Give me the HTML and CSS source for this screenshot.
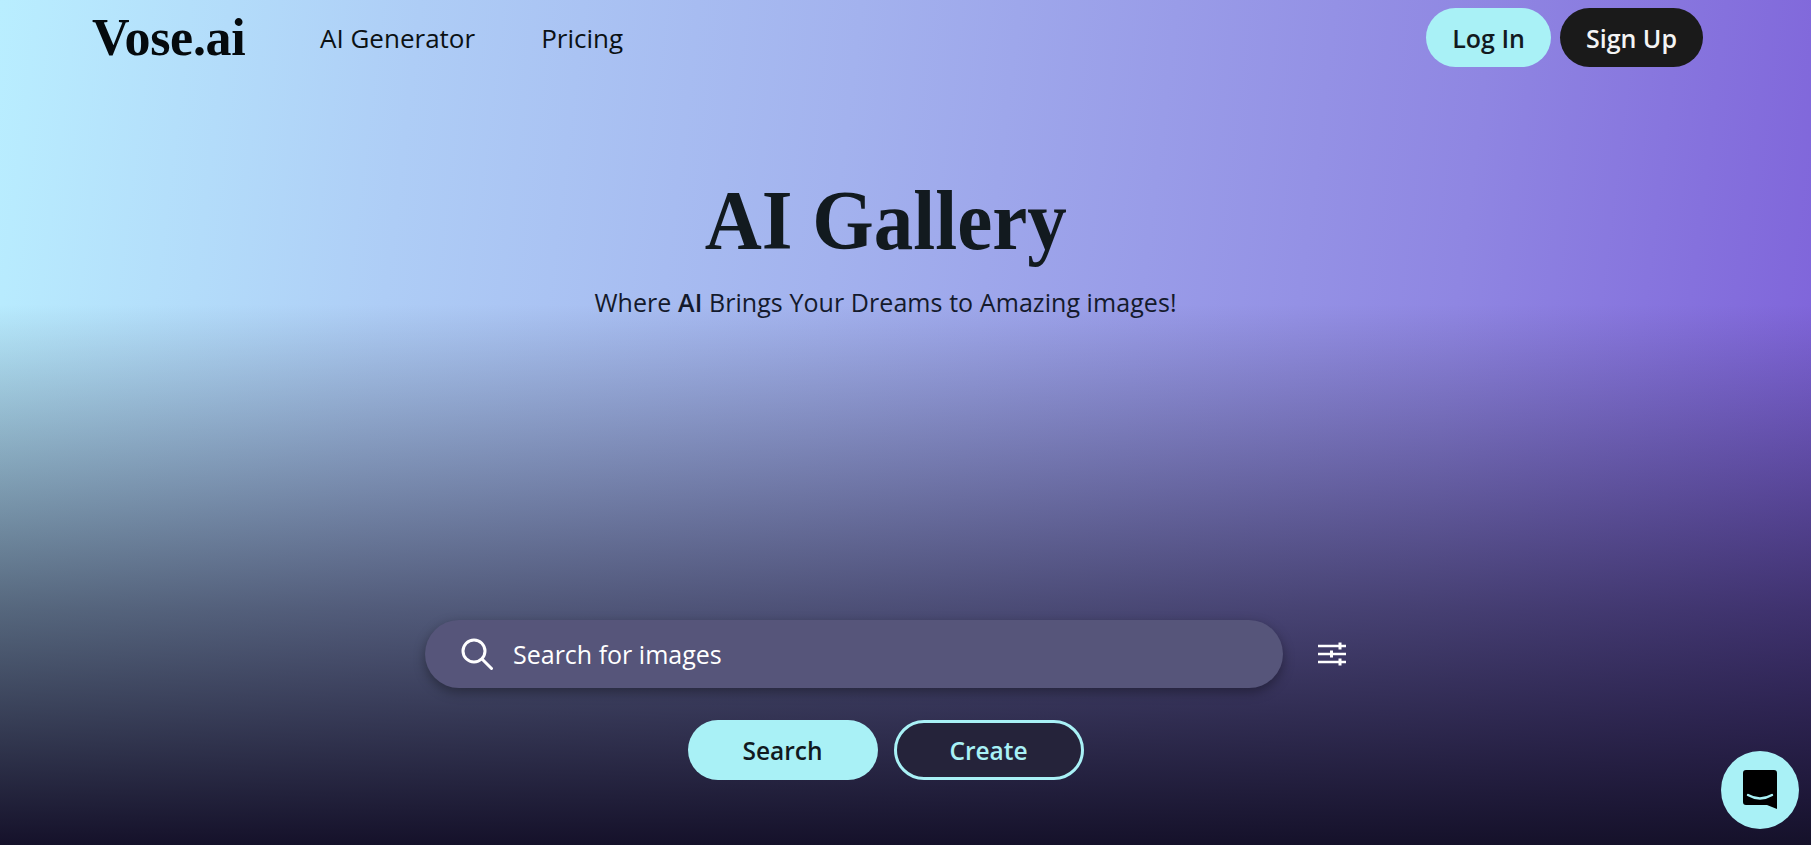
FILE: index.html
```html
<!DOCTYPE html>
<html lang="en">
<head>
    <meta charset="UTF-8">
    <meta name="viewport" content="width=device-width, initial-scale=1.0">
    <title>AI Gallery</title>
    <link rel="stylesheet" href="styles.css">
</head>
<body>
    <header class="topbar">
        <a class="logo" href="#">Vose.ai</a>
        <nav class="nav">
            <a href="#">AI Generator</a>
            <a href="#">Pricing</a>
        </nav>
        <div class="auth">
            <button class="pill pill-cyan auth-btn">Log In</button>
            <button class="pill pill-dark auth-btn">Sign Up</button>
        </div>
    </header>

    <main class="hero">
        <h1 class="title">AI Gallery</h1>
        <p class="subtitle">Where <b>AI</b> Brings Your Dreams to Amazing images!</p>

        <div class="search-row">
            <div class="search-box">
                <svg class="search-icon" viewBox="0 0 32 32" fill="none" stroke="#fff" stroke-width="3" stroke-linecap="round">
                    <circle cx="13" cy="13" r="11"/>
                    <path d="M21 21 L30.5 30.5"/>
                </svg>
                <span class="search-text">Search for images</span>
            </div>
            <svg class="filter-icon" viewBox="0 0 28 24" fill="none" stroke="#fff" stroke-width="2.4">
                <path d="M0 4 H28 M0 12 H28 M0 20 H28"/>
                <path d="M22 0.5 V7.5 M13.5 8.5 V15.5 M22 16.5 V23.5" stroke-width="3"/>
            </svg>
        </div>

        <div class="actions">
            <button class="pill pill-cyan action-btn">Search</button>
            <button class="pill pill-outline action-btn">Create</button>
        </div>
    </main>

    <button class="chat-btn" aria-label="Chat">
        <svg viewBox="0 0 34 40" width="34" height="40">
            <path d="M3 0 H31 Q34 0 34 3 V39 L24 35 H3 Q0 35 0 32 V3 Q0 0 3 0 Z" fill="#000"/>
            <path d="M5 25 Q17 32 29 25" fill="none" stroke="#a9f1f6" stroke-width="2.4" stroke-linecap="round"/>
        </svg>
    </button>
</body>
</html>
```

FILE: styles.css
```css
* {
    margin: 0;
    padding: 0;
    box-sizing: border-box;
}
body {
    height: 845px;
    overflow: hidden;
    font-family: "Open Sans", "Noto Sans", Arial, sans-serif;
    color: #121a1f;
    background:
        linear-gradient(180deg, rgba(21, 17, 40, 0) 36%, rgba(21, 17, 40, 0.6) 72%, #15112a 100%),
        linear-gradient(97deg, #b9eeff 0%, #aecdf6 22%, #a3b2ee 45%, #8f86e2 78%, #7d60d9 100%);
}
.topbar {
    display: flex;
    align-items: center;
    height: 75px;
    padding: 0 108px 0 92px;
}
.logo {
    font-family: "Liberation Serif", serif;
    font-weight: bold;
    font-size: 52px;
    letter-spacing: -0.3px;
    color: #050a0d;
    text-decoration: none;
    width: 228px;
}
.nav {
    display: flex;
    gap: 66px;
}
.nav a {
    font-size: 26px;
    font-weight: 500;
    color: #0b1114;
    text-decoration: none;
}
.auth {
    display: flex;
    gap: 9px;
    margin-left: auto;
}
.pill {
    font-family: inherit;
    font-weight: 600;
    font-size: 25px;
    border-radius: 30px;
    border: none;
    height: 59px;
}
.pill-cyan {
    background: #a9f1f6;
    color: #121a1f;
}
.pill-dark {
    background: #1a1a1a;
    color: #f4f4f4;
}
.pill-outline {
    background: #25233a;
    color: #a9f1f6;
    border: 3px solid #a9f1f6;
}
.auth-btn {
    padding: 0 26px;
}
.hero {
    display: flex;
    flex-direction: column;
    align-items: center;
    padding-right: 40px;
}
.title {
    font-family: "Liberation Serif", serif;
    font-weight: bold;
    font-size: 85px;
    line-height: 100px;
    margin-top: 95px;
    color: #121a1f;
    transform: scaleX(0.93);
}
.subtitle {
    font-size: 25px;
    letter-spacing: 0.07px;
    line-height: 34px;
    margin-top: 15px;
    color: #141a2c;
}
.subtitle b {
    font-weight: 600;
}
.search-row {
    display: flex;
    align-items: center;
    gap: 35px;
    margin-top: 301px;
}
.search-box {
    display: flex;
    align-items: center;
    gap: 20px;
    width: 858px;
    height: 68px;
    padding-left: 36px;
    border-radius: 34px;
    background: #56557a;
    box-shadow: 0 4px 12px rgba(0, 0, 0, 0.35);
}
.search-icon {
    width: 32px;
    height: 32px;
}
.search-text {
    font-size: 25px;
    color: #fff;
}
.filter-icon {
    width: 28px;
    height: 24px;
}
.actions {
    display: flex;
    gap: 16px;
    margin-top: 32px;
}
.action-btn {
    width: 190px;
    height: 60px;
    font-size: 24.5px;
}
.chat-btn {
    position: fixed;
    right: 12px;
    bottom: 16px;
    width: 78px;
    height: 78px;
    border: none;
    border-radius: 50%;
    background: #a9f1f6;
    display: flex;
    align-items: center;
    justify-content: center;
}
```
